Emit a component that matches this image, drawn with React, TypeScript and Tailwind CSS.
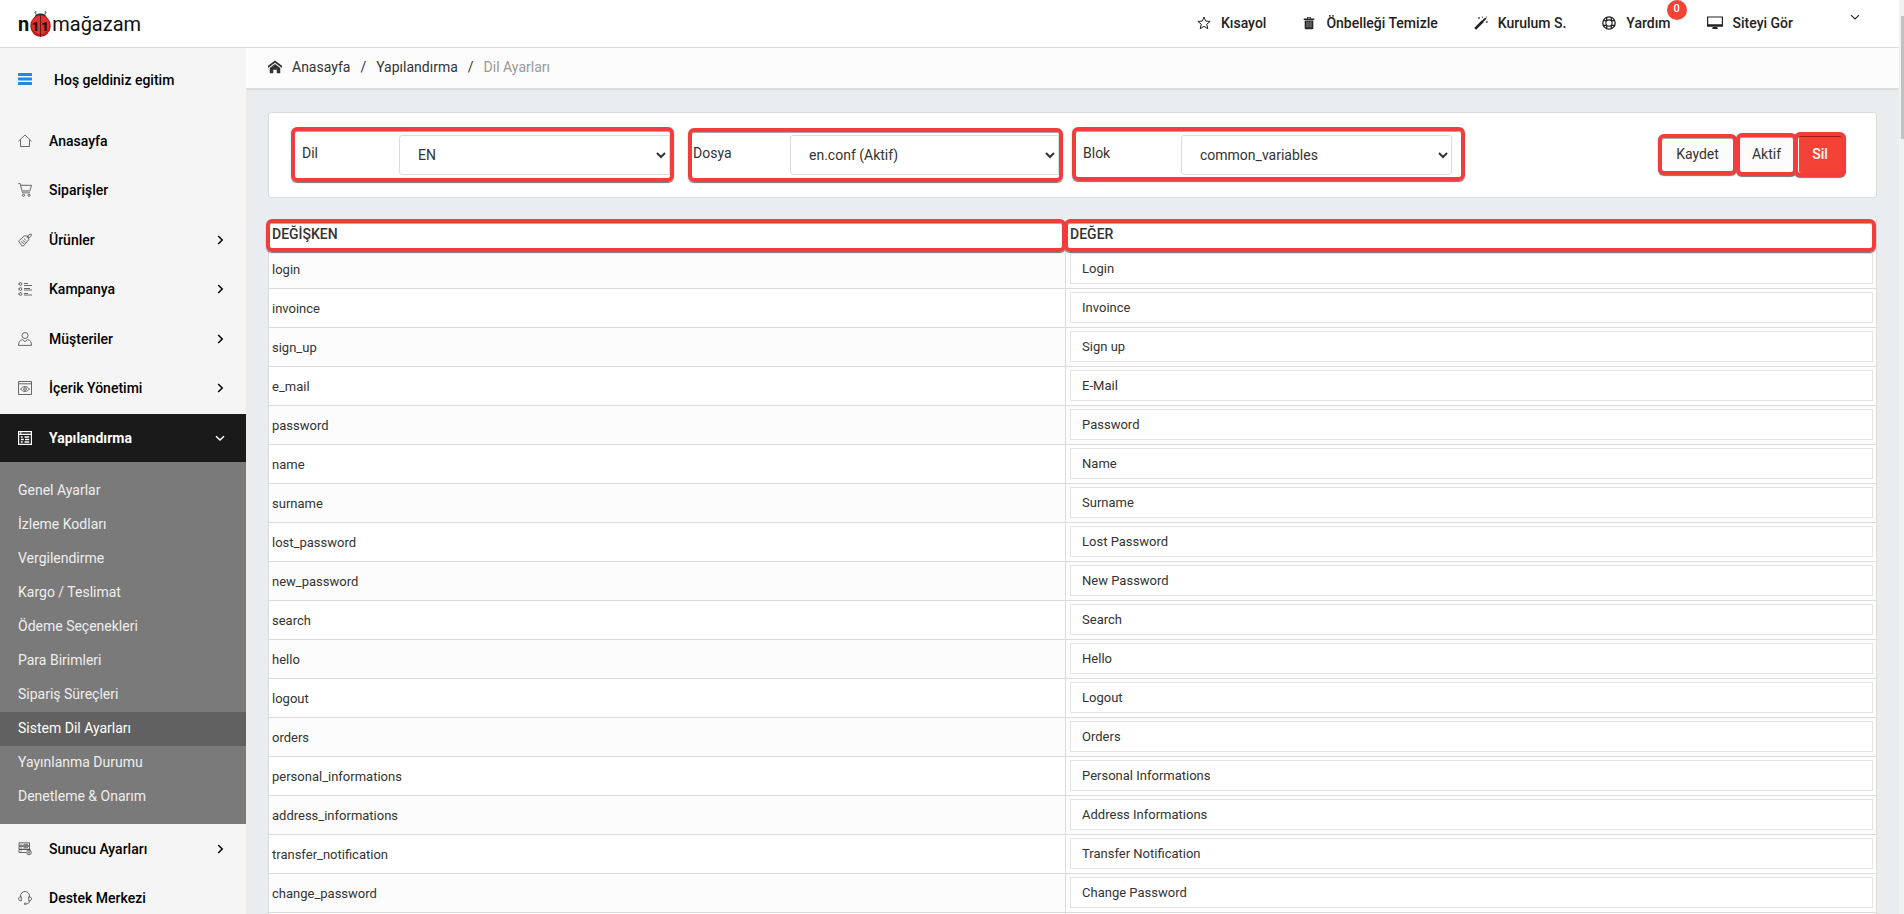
import { FC, ReactNode, useState } from "react";
import { ImHome } from "react-icons/im";

type MenuItem = {
  label: string;
  icon: ReactNode;
  hasChildren?: boolean;
};

const Line: FC<{ children: ReactNode }> = ({ children }) => (
  <svg
    viewBox="0 0 14 14"
    className="size-[14px] shrink-0"
    fill="none"
    stroke="currentColor"
    strokeWidth="0.8"
    aria-hidden="true"
  >
    {children}
  </svg>
);

const topMenu: MenuItem[] = [
  {
    label: "Anasayfa",
    icon: (
      <Line>
        <path d="M0.5 7.2 7 1l6.500 6.200M2.500 6v6.500h9V6" />
      </Line>
    ),
  },
  {
    label: "Siparişler",
    icon: (
      <Line>
        <path d="M0.300 0.600h1.900l2.300 9.200h7.500M2.700 2.300h10.800l-1.600 5.600H4.200" />
        <path d="M4 7.500h8l-.4 2H4.500z" fill="#aaa" stroke="none" />
        <circle cx="5.500" cy="12.300" r="1.100" />
        <circle cx="11" cy="12.300" r="1.100" />
      </Line>
    ),
  },
  {
    label: "Ürünler",
    hasChildren: true,
    icon: (
      <Line>
        <path d="M.6 8 6.500 2.800 10 3.200l.8 3.600L5.600 12.800 3.900 13z" />
        <path d="m3 8.500 3.200 2.300M4.500 7l3 2.500M6 5.600l2.300 2" />
        <path d="M9 5c1-3 3-4.500 4-4s0 3.200-3 4.500" />
      </Line>
    ),
  },
  {
    label: "Kampanya",
    hasChildren: true,
    icon: (
      <Line>
        <circle cx="2.500" cy="2" r="1.400" />
        <circle cx="2.500" cy="7" r="1.400" />
        <circle cx="2.500" cy="12" r="1.400" />
        <path d="M0.300 2h1M0.300 7h1M0.300 12h1M6 1.500h4M6 3.500h8M6 6.500h6M6 8h8M6 11.500h4M6 13h8" />
      </Line>
    ),
  },
  {
    label: "Müşteriler",
    hasChildren: true,
    icon: (
      <Line>
        <circle cx="7" cy="3.500" r="3" />
        <path d="M4.500 7.500C1.500 8.500.5 10 .5 13.400h13c0-3.400-1-4.900-4-5.900L7 9.700z" />
      </Line>
    ),
  },
  {
    label: "İçerik Yönetimi",
    hasChildren: true,
    icon: (
      <Line>
        <path d="M0.500 0.500h13v13H0.500zM0.500 2.800h13" />
        <path d="M2.500 8C5 4.800 9 4.800 11.500 8 9 11.200 5 11.200 2.500 8z" />
        <circle cx="7" cy="8" r="1.300" />
      </Line>
    ),
  },
];

const bottomMenu: MenuItem[] = [
  {
    label: "Sunucu Ayarları",
    hasChildren: true,
    icon: (
      <Line>
        <path d="M8 10.500H1V7.500h11v1M1 4.200h10.500v3H1zM1 .8h10.500v3H1zM2.500 2.300h1M2.500 5.700h1M2.500 9h1M5.500 2.300H10M5.500 5.700H10" />
        <circle cx="11" cy="10.500" r="2.300" />
        <circle cx="11" cy="10.500" r="0.800" />
      </Line>
    ),
  },
  {
    label: "Destek Merkezi",
    icon: (
      <Line>
        <path d="M2.500 6V5a4.500 4.500 0 0 1 9 0v1M3.300 5.800v4C1.500 10 .5 9 .5 7.800s1-2 2.800-2zM10.700 5.800v4c1.800.2 2.800-.8 2.800-2s-1-2-2.800-2zM11.300 10c0 2-1 2.800-3 2.800" />
        <circle cx="7.300" cy="12.800" r="0.900" />
      </Line>
    ),
  },
];

const subMenu = [
  "Genel Ayarlar",
  "İzleme Kodları",
  "Vergilendirme",
  "Kargo / Teslimat",
  "Ödeme Seçenekleri",
  "Para Birimleri",
  "Sipariş Süreçleri",
  "Sistem Dil Ayarları",
  "Yayınlanma Durumu",
  "Denetleme & Onarım",
];

const variables: [string, string][] = [
  ["login", "Login"],
  ["invoince", "Invoince"],
  ["sign_up", "Sign up"],
  ["e_mail", "E-Mail"],
  ["password", "Password"],
  ["name", "Name"],
  ["surname", "Surname"],
  ["lost_password", "Lost Password"],
  ["new_password", "New Password"],
  ["search", "Search"],
  ["hello", "Hello"],
  ["logout", "Logout"],
  ["orders", "Orders"],
  ["personal_informations", "Personal Informations"],
  ["address_informations", "Address Informations"],
  ["transfer_notification", "Transfer Notification"],
  ["change_password", "Change Password"],
  ["", ""],
];

const Chevron: FC<{ down?: boolean }> = ({ down }) => (
  <svg
    viewBox="0 0 10 10"
    className="size-[10px]"
    fill="none"
    stroke="currentColor"
    strokeWidth="1.5"
    aria-hidden="true"
  >
    <path d={down ? "M1 3.300 5 7l4-3.700" : "M3.200 1 7.200 5l-4 4"} />
  </svg>
);

const Logo: FC = () => (
  <a href="#" className="flex items-center text-xl text-[#111]">
    <span className="font-bold">n</span>
    <svg viewBox="0 0 24 30" className="h-[30px] w-[23px]" aria-hidden="true">
      <path d="M8 6 6 2.500M16 6l2-3.500" stroke="#777" strokeWidth="1.200" />
      <circle cx="7" cy="2.500" r="1" fill="#888" />
      <circle cx="17" cy="2.500" r="1" fill="#888" />
      <path d="M5.500 9C6 2.500 18 2.500 18.500 9z" fill="#2a2a2a" />
      <ellipse cx="12" cy="17" rx="10.700" ry="11.300" fill="#c3191c" />
      <ellipse cx="12" cy="16" rx="9.200" ry="9.800" fill="#e2312f" />
      <path d="M12 6v22.300" stroke="#4a0e0e" strokeWidth="0.800" />
      <text x="2.500" y="22" fontSize="14" fontWeight="900" fontFamily="Roboto, sans-serif" fill="#1c1010">
        1
      </text>
      <text x="12.500" y="22" fontSize="14" fontWeight="900" fontFamily="Roboto, sans-serif" fill="#1c1010">
        1
      </text>
    </svg>
    <span>mağazam</span>
  </a>
);

const TopLink: FC<{ label: string; icon: ReactNode; badge?: string }> = ({
  label,
  icon,
  badge,
}) => (
  <a href="#" className="relative flex items-center gap-[10px]">
    {icon}
    {label}
    {badge && (
      <span className="absolute -top-[13px] -right-4 flex size-5 items-center justify-center rounded-full bg-[#f44336] pb-0.5 text-[11px] text-white">
        {badge}
      </span>
    )}
  </a>
);

const Header: FC = () => (
  <header className="flex h-12 shrink-0 items-center justify-between border-b border-[#dcdcdc] bg-white pr-[39px] pl-[18px]">
    <Logo />
    <nav className="flex items-center gap-9 pb-px text-sm font-medium text-[#222]">
      <TopLink
        label="Kısayol"
        icon={
          <svg viewBox="0 0 14 14" className="size-[14px]" fill="none" stroke="currentColor" strokeWidth="1">
            <path d="m7 1 1.700 4.100 4.400.3-3.400 2.900 1.100 4.400L7 10.300l-3.800 2.400 1.100-4.400L.9 5.400l4.400-.3z" />
          </svg>
        }
      />
      <TopLink
        label="Önbelleği Temizle"
        icon={
          <svg viewBox="0 0 14 14" className="size-[14px]" fill="currentColor">
            <path d="M5 1.200h4v1.300h3.300V4H1.700V2.500H5zM5.800 2v.5h2.400V2zM2.700 4.500h8.600v7.500c0 .8-.4 1.200-1.200 1.200H3.900c-.8 0-1.200-.4-1.200-1.200z" />
            <path d="M5 5.500v6M7 5.500v6M9 5.500v6" stroke="#bbb" strokeWidth="0.700" />
          </svg>
        }
      />
      <TopLink
        label="Kurulum S."
        icon={
          <svg viewBox="0 0 14 14" className="size-[14px]" fill="none" stroke="currentColor">
            <path d="M1.200 12.800 9 5" strokeWidth="2.600" />
            <path d="m9 5 2.800-2.800" strokeWidth="1.800" />
            <path d="M5 1v2M4 2h2M8.500.5v1.600M12.800 5v2M11.800 6h2M12.500.3v1.200" strokeWidth="0.700" />
          </svg>
        }
      />
      <TopLink
        label="Yardım"
        badge="0"
        icon={
          <svg viewBox="0 0 14 14" className="size-[14px]" fill="none" stroke="currentColor">
            <circle cx="7" cy="7" r="6.200" strokeWidth="1.300" />
            <circle cx="7" cy="7" r="3.100" strokeWidth="1.100" />
            <path
              d="M4.700 1v3.600M9.300 1v3.600M4.700 9.400V13M9.300 9.400V13M1 4.700h3.600M1 9.300h3.600M9.400 4.700H13M9.400 9.300H13"
              strokeWidth="1.300"
            />
          </svg>
        }
      />
      <TopLink
        label="Siteyi Gör"
        icon={
          <svg viewBox="0 0 16 14" className="h-[14px] w-4" fill="currentColor">
            <path d="M0 .5h16v10.300H0zM1.200 1.600v6.600h13.600V1.600zM6 10.500h4l.8 2.400H5.200z" fillRule="evenodd" />
          </svg>
        }
      />
      <button type="button" aria-label="Hesap menüsü" className="mb-3 ml-[21px]">
        <svg viewBox="0 0 10 10" className="size-[10px]" fill="none" stroke="currentColor" strokeWidth="1.100">
          <path d="M1 3.200 5 7l4-3.800" />
        </svg>
      </button>
    </nav>
  </header>
);

const MenuLink: FC<{ item: MenuItem }> = ({ item }) => (
  <li className="even:mb-px">
    <a
      href="#"
      className="flex h-[49px] items-center pr-[21px] pl-[18px] text-sm font-medium text-black"
    >
      <span className="mr-[17px] text-[#444]">{item.icon}</span>
      <span className="flex-1">{item.label}</span>
      {item.hasChildren && <Chevron />}
    </a>
  </li>
);

const Sidebar: FC = () => (
  <aside className="w-[246px] shrink-0 overflow-hidden bg-[#f5f5f5]">
    <div className="flex h-[68px] items-start gap-[22px] pt-[22px] pl-[18px] text-sm font-medium text-black">
      <button type="button" aria-label="Menü" className="pt-[3px]">
        <svg viewBox="0 0 14 12" className="h-3 w-[14px]" fill="#1e88e5">
          <rect width="14" height="3" rx="0.600" />
          <rect y="4.500" width="14" height="3" rx="0.600" />
          <rect y="9" width="14" height="3" rx="0.600" />
        </svg>
      </button>
      Hoş geldiniz egitim
    </div>
    <nav>
      <ul>
        {topMenu.map((item) => (
          <MenuLink key={item.label} item={item} />
        ))}
      </ul>
      <a
        href="#"
        className="mt-0.5 flex h-12 items-center bg-[#1a1a1a] pr-[21px] pl-[18px] text-sm font-bold text-white"
      >
        <span className="mr-[17px]">
          <Line>
            <path d="M.6.6h12.800v12.800H.6zM.6 3.300h12.800M2 2h1.500" strokeWidth="1.200" />
            <path d="M2.800 6h2M6.500 6h4.700M2.800 8.500h3M7 8.500h4.200M2.800 11h2M6.500 11h4.700" strokeWidth="1.300" />
          </Line>
        </span>
        <span className="flex-1">Yapılandırma</span>
        <Chevron down />
      </a>
      <ul className="bg-[#7a7a7a] pt-3 pb-[10px]">
        {subMenu.map((label) => (
          <li key={label}>
            <a
              href="#"
              className={
                label === "Sistem Dil Ayarları"
                  ? "flex h-[34px] items-center bg-[#616161] pb-[3px] pl-[18px] text-sm text-white"
                  : "flex h-[34px] items-center pb-[3px] pl-[18px] text-sm text-[#eee]"
              }
            >
              {label}
            </a>
          </li>
        ))}
      </ul>
      <ul>
        {bottomMenu.map((item) => (
          <MenuLink key={item.label} item={item} />
        ))}
      </ul>
    </nav>
  </aside>
);

const frame =
  "rounded-md border-4 border-[#f33c3c] shadow-[0_1px_1px_#777,inset_0_1px_0_#aaa]";

const Filters: FC = () => {
  return (
    <form
      className="flex items-start rounded-[3px] border border-[#dcdcdc] bg-white pt-[14px] pr-[30px] pb-[15px] pl-[22px] text-sm text-[#333]"
      onSubmit={(event) => event.preventDefault()}
    >
      <div className={`${frame} flex h-[55px] min-w-0 basis-[383px] items-start pt-1 pl-[7px]`}>
        <label htmlFor="language" className="w-[97px] shrink-0 pt-2">
          Dil
        </label>
        <select
          id="language"
          className="h-10 min-w-0 flex-1 rounded-l-[3px] border border-[#dcdcdc] bg-white pl-[14px]"
        >
          <option>EN</option>
        </select>
      </div>
      <div className={`${frame} mt-px ml-[14px] flex h-[54px] min-w-0 basis-[375px] items-start pt-[3px]`}>
        <label htmlFor="file" className="w-[98px] shrink-0 pt-2 pl-px">
          Dosya
        </label>
        <select
          id="file"
          className="h-10 min-w-0 flex-1 rounded-l-[3px] border border-[#dcdcdc] bg-white pl-[14px]"
        >
          <option>en.conf (Aktif)</option>
        </select>
      </div>
      <div className={`${frame} ml-[9px] flex h-[54px] min-w-0 basis-[393px] items-start pt-1 pr-[9px] pl-[7px]`}>
        <label htmlFor="block" className="w-[98px] shrink-0 pt-2">
          Blok
        </label>
        <select
          id="block"
          className="h-10 min-w-0 flex-1 rounded-[3px] border border-[#dcdcdc] bg-white pl-[14px]"
        >
          <option>common_variables</option>
        </select>
      </div>
      <div className="ml-auto flex h-[55px] items-center">
        <button type="submit" className={`${frame} h-[41px] w-[79px] bg-[#fcfcfc] pb-0.5`}>
          Kaydet
        </button>
        <button type="button" className={`${frame} -ml-px h-[43px] w-[61px] bg-[#fcfcfc] pb-0.5`}>
          Aktif
        </button>
        <button
          type="button"
          className="-ml-[3px] h-[45px] w-[52px] rounded-md border-4 border-[#f33c3c] bg-[#f44336] pb-0.5 font-medium text-white shadow-[0_1px_1px_#777,inset_0_1px_0_#a01c14,inset_1px_0_0_#fff]"
        >
          Sil
        </button>
      </div>
    </form>
  );
};

const VariableTable: FC = () => {
  const [values, setValues] = useState<string[]>(variables.map(([, value]) => value));

  return (
    <table className="mt-[21px] w-full table-fixed border-separate border-spacing-0 border-x border-[#dcdcdc] bg-white text-left text-[#333]">
      <thead>
        <tr className="h-[31px] text-sm">
          <th className="relative w-[49.6%] pb-px pl-[3px] font-medium">
            DEĞİŞKEN
            <span className={`${frame} absolute top-0 right-0 -bottom-0.5 -left-[3px]`}></span>
          </th>
          <th className="relative pb-px pl-1 font-medium">
            DEĞER
            <span className={`${frame} absolute top-0 right-0 -bottom-0.5 -left-0.5`}></span>
          </th>
        </tr>
      </thead>
      <tbody>
        {variables.map(([name], index) => (
          <tr key={index} className="h-[39px] text-[13px] odd:bg-[#fcfcfc]">
            <td className="border-r border-b border-[#dcdcdc] pt-px pl-[3px]">{name}</td>
            <td className="border-b border-[#dcdcdc] pr-[3px] pb-px pl-1">
              <input
                type="text"
                aria-label={name || "Değer"}
                value={values[index]}
                onChange={(event) =>
                  setValues(values.map((v, i) => (i === index ? event.target.value : v)))
                }
                className="block h-[31px] w-full border border-[#e4e4e4] bg-white px-[11px]"
              />
            </td>
          </tr>
        ))}
      </tbody>
    </table>
  );
};

const App: FC = () => {
  return (
    <div className="flex h-screen overflow-hidden bg-[#e9edf0] font-[Roboto,'Open_Sans',sans-serif]">
      <div className="flex min-w-0 flex-1 flex-col">
        <Header />
        <div className="flex min-h-0 flex-1">
          <Sidebar />
          <main className="min-w-0 flex-1 overflow-hidden">
            <nav
              aria-label="Sayfa yolu"
              className="flex h-[42px] items-center gap-[10px] border-b-2 border-[#dcdcdc] bg-[#fcfcfc] px-[22px] pb-0.5 text-sm text-[#333]"
            >
              <ImHome className="size-[14px]" />
              <a href="#">Anasayfa</a>
              <span>/</span>
              <a href="#">Yapılandırma</a>
              <span>/</span>
              <span className="text-[#999]">Dil Ayarları</span>
            </nav>
            <div className="p-[22px]">
              <Filters />
              <VariableTable />
            </div>
          </main>
        </div>
      </div>
      <div className="w-[5px] bg-[#f1f1f1] pt-4 pl-0.5">
        <div className="h-[123px] bg-[#c1c1c1]"></div>
      </div>
    </div>
  );
};

export default App;
